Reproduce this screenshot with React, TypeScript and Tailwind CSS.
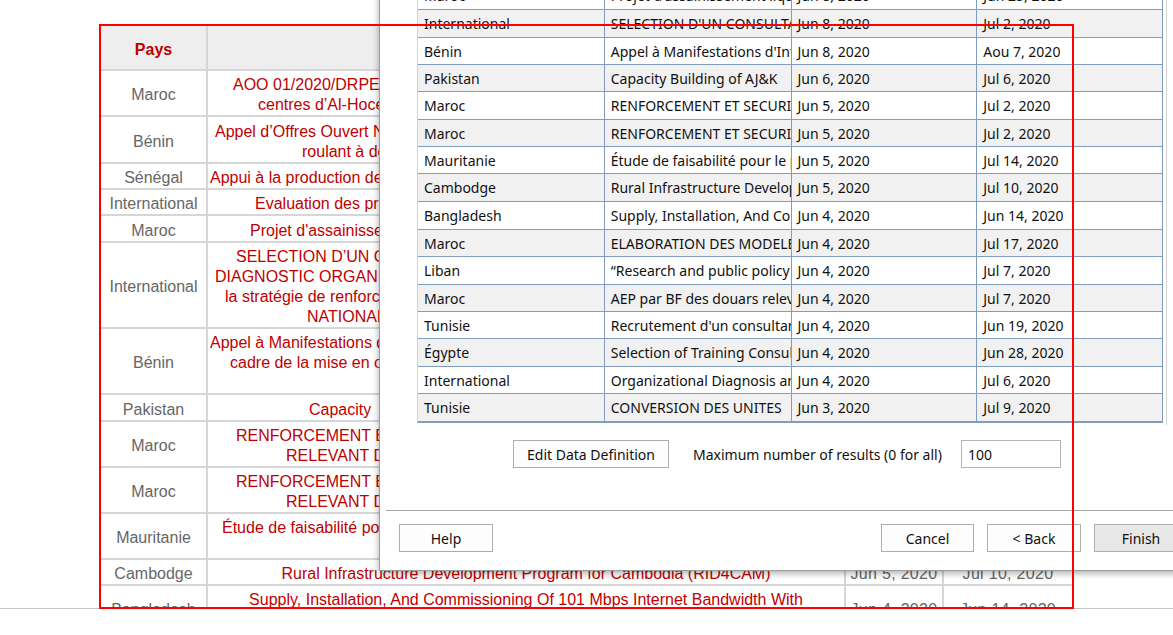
import React from 'react';

type PageRow = {
  h: string;
  country: string;
  lines?: [string, string][];
  centered?: string[];
  pub: string;
  due: string;
};

const pageRows: PageRow[] = [
  { h: 'h-[46px]', country: 'Maroc', lines: [['pl-[25px]', 'AOO 01/2020/DRPE/AT/ER pour les travaux de construction des'], ['pl-[50px]', 'centres d’Al-Hoceima et de Taza']], pub: 'Jun 9, 2020', due: 'Jul 8, 2020' },
  { h: 'h-[47px]', country: 'Bénin', lines: [['pl-[7px]', 'Appel d’Offres Ouvert National pour l’acquisition de matériel'], ['pl-[94px]', 'roulant à deux roues']], pub: 'Jun 9, 2020', due: 'Jul 9, 2020' },
  { h: 'h-[26px]', country: 'Sénégal', lines: [['pl-[2px]', 'Appui à la production de statistiques agricoles']], pub: 'Jun 9, 2020', due: 'Jun 30, 2020' },
  { h: 'h-[26px]', country: 'International', lines: [['pl-[47px]', 'Evaluation des programmes']], pub: 'Jun 8, 2020', due: 'Jun 22, 2020' },
  { h: 'h-[27px]', country: 'Maroc', lines: [['pl-[42px]', "Projet d'assainissement liquide"]], pub: 'Jun 8, 2020', due: 'Jun 25, 2020' },
  { h: 'h-[86px]', country: 'International', lines: [['pl-[28px]', 'SELECTION D’UN CONSULTANT POUR LA REALISATION'], ['pl-[7px]', 'DIAGNOSTIC ORGANISATIONNEL ET L’ELABORATION DE'], ['pl-[17px]', 'la stratégie de renforcement des capacités du COMITE'], ['pl-[99px]', 'NATIONAL OLYMPIQUE']], pub: 'Jun 8, 2020', due: 'Jul 2, 2020' },
  { h: 'h-[66px]', country: 'Bénin', lines: [['pl-[2px]', 'Appel à Manifestations d’Intérêt pour le recrutement'], ['pl-[22px]', 'cadre de la mise en œuvre du projet'], ['pl-[200px]', 'de développement communal']], pub: 'Jun 8, 2020', due: 'Aou 7, 2020' },
  { h: 'h-[27px]', country: 'Pakistan', lines: [['pl-[101px]', 'Capacity\u2003Building of AJ&K']], pub: 'Jun 6, 2020', due: 'Jul 6, 2020' },
  { h: 'h-[46px]', country: 'Maroc', lines: [['pl-[28px]', 'RENFORCEMENT ET SECURISATION DE'], ['pl-[78px]', 'RELEVANT DE LA PROVINCE']], pub: 'Jun 5, 2020', due: 'Jul 2, 2020' },
  { h: 'h-[46px]', country: 'Maroc', lines: [['pl-[28px]', 'RENFORCEMENT ET SECURISATION DE'], ['pl-[78px]', 'RELEVANT DE LA PROVINCE']], pub: 'Jun 5, 2020', due: 'Jul 2, 2020' },
  { h: 'h-[46px]', country: 'Mauritanie', lines: [['pl-[14px]', 'Étude de faisabilité pour le projet'], ['pl-[200px]', 'de Nouakchott']], pub: 'Jun 5, 2020', due: 'Jul 14, 2020' },
  { h: 'h-[26px]', country: 'Cambodge', centered: ['Rural Infrastructure Development Program for Cambodia (RID4CAM)'], pub: 'Jun 5, 2020', due: 'Jul 10, 2020' },
  { h: 'h-[46px]', country: 'Bangladesh', centered: ['Supply, Installation, And Commissioning Of 101 Mbps Internet Bandwidth With', 'Redundancy'], pub: 'Jun 4, 2020', due: 'Jun 14, 2020' },
];

const gridRows: [string, string, string, string, string][] = [
  ['h-[28px]', 'Maroc', "Projet d'assainissement liquide", 'Jun 8, 2020', 'Jun 25, 2020'],
  ['h-[28px]', 'International', "SELECTION D'UN CONSULTANT", 'Jun 8, 2020', 'Jul 2, 2020'],
  ['h-[27px]', 'Bénin', "Appel à Manifestations d'Intérêt", 'Jun 8, 2020', 'Aou 7, 2020'],
  ['h-[27px]', 'Pakistan', 'Capacity Building of AJ&K', 'Jun 6, 2020', 'Jul 6, 2020'],
  ['h-[28px]', 'Maroc', 'RENFORCEMENT ET SECURISATION', 'Jun 5, 2020', 'Jul 2, 2020'],
  ['h-[27px]', 'Maroc', 'RENFORCEMENT ET SECURISATION', 'Jun 5, 2020', 'Jul 2, 2020'],
  ['h-[27px]', 'Mauritanie', 'Étude de faisabilité pour le projet', 'Jun 5, 2020', 'Jul 14, 2020'],
  ['h-[28px]', 'Cambodge', 'Rural Infrastructure Development', 'Jun 5, 2020', 'Jul 10, 2020'],
  ['h-[28px]', 'Bangladesh', 'Supply, Installation, And Commissioning', 'Jun 4, 2020', 'Jun 14, 2020'],
  ['h-[27px]', 'Maroc', 'ELABORATION DES MODELES', 'Jun 4, 2020', 'Jul 17, 2020'],
  ['h-[28px]', 'Liban', '“Research and public policy', 'Jun 4, 2020', 'Jul 7, 2020'],
  ['h-[27px]', 'Maroc', 'AEP par BF des douars relevant', 'Jun 4, 2020', 'Jul 7, 2020'],
  ['h-[27px]', 'Tunisie', "Recrutement d'un consultant", 'Jun 4, 2020', 'Jun 19, 2020'],
  ['h-[28px]', 'Égypte', 'Selection of Training Consultant', 'Jun 4, 2020', 'Jun 28, 2020'],
  ['h-[27px]', 'International', 'Organizational Diagnosis and', 'Jun 4, 2020', 'Jul 6, 2020'],
  ['h-[28px]', 'Tunisie', 'CONVERSION DES UNITES', 'Jun 3, 2020', 'Jul 9, 2020'],
];

const cell = 'border-r-2 border-b-2 border-[#d6d6d6] overflow-hidden pt-[4px]';
const gCell = 'border-r border-[#7f9bbd] overflow-hidden whitespace-nowrap pl-[6px] flex items-center';
const winBtn = 'h-[28px] border border-[#adadad] flex items-center justify-center text-[#111]';

const App: React.FC = () => {
  return (
    <div className="relative w-[1173px] h-[635px] bg-white overflow-hidden">
      {/* web page behind the dialog */}
      <div className="h-[609px] border-b border-[#c4c4c4] pt-[26px] pl-[101px] overflow-hidden font-['Liberation_Sans',Arial,sans-serif] text-[16px] leading-[20px]">
        <div className="w-[973px]">
          {/* header */}
          <div className="flex h-[45px] bg-[#eeeeee]">
            <div className={`${cell} w-[107px] flex items-center justify-center font-bold text-[#c00000]`}>Pays</div>
            <div className={`${cell} w-[638px]`}></div>
            <div className={`${cell} w-[98px]`}></div>
            <div className={`${cell} w-[130px]`}></div>
          </div>
          {pageRows.map((r, i) => (
            <div key={i} className={`flex ${r.h}`}>
              <div className={`${cell} w-[107px] flex items-center justify-center text-[#666666]`}>{r.country}</div>
              <div className={`${cell} w-[638px] flex flex-col justify-center text-[#c00000] whitespace-nowrap`}>
                {r.lines &&
                  r.lines.map(([pad, t], j) => (
                    <div key={j} className={pad}>
                      {t}
                    </div>
                  ))}
                {r.centered &&
                  r.centered.map((t, j) => (
                    <div key={j} className="text-center">
                      {t}
                    </div>
                  ))}
              </div>
              <div className={`${cell} w-[98px] flex items-center justify-center text-[#666666] tracking-[0.3px]`}>{r.pub}</div>
              <div className={`${cell} w-[130px] flex items-center justify-center text-[#666666] tracking-[0.3px]`}>{r.due}</div>
            </div>
          ))}
        </div>
      </div>

      {/* wizard dialog */}
      <div className="absolute left-[379px] top-[-19px] w-[829px] h-[590px] bg-white border border-[#9c9c9c] shadow-[0_2px_7px_rgba(0,0,0,0.35)] flex flex-col font-['Noto_Sans',sans-serif] text-[14px] text-[#111]">
        <div className="ml-[37px] w-[750px] h-[443px] border-r border-[#d4d4d4] pr-[3px]">
          <div className="w-[746px] border-l border-[#c9d4e2] border-b border-b-[#7f9bbd]">
            {gridRows.map(([h, c1, c2, c3, c4], i) => (
              <div key={i} className={`flex ${h} border-b border-[#809cbf] ${i % 2 === 1 ? 'bg-[#f1f1f1]' : 'bg-white'}`}>
                <div className={`${gCell} w-[187px]`}>{c1}</div>
                <div className={`${gCell} w-[187px]`}>{c2}</div>
                <div className={`${gCell} w-[186px]`}>{c3}</div>
                <div className={`${gCell} w-[186px]`}>{c4}</div>
              </div>
            ))}
          </div>
        </div>

        <div className="flex items-center mt-[15px] ml-[133px]">
          <div className={`${winBtn} w-[156px] bg-[#fdfdfd]`}>Edit Data Definition</div>
          <span className="ml-[24px]">Maximum number of results (0 for all)</span>
          <div className="ml-auto mr-[146px] w-[100px] h-[28px] border border-[#b4b4b4] bg-white flex items-center pl-[6px]">100</div>
        </div>

        <div className="mt-[42px] mx-[6px] h-[2px] border-t border-[#a6a6a6] border-b border-b-white"></div>

        <div className="flex items-center mt-[12px] px-[19px]">
          <div className={`${winBtn} w-[94px] bg-[#fdfdfd]`}>Help</div>
          <div className="ml-auto flex gap-[13px]">
            <div className={`${winBtn} w-[93px] bg-[#fdfdfd]`}>Cancel</div>
            <div className={`${winBtn} w-[94px] bg-[#fdfdfd]`}>&lt; Back</div>
            <div className={`${winBtn} w-[94px] bg-[#e8e8e8]`}>Finish</div>
          </div>
        </div>
      </div>

      {/* red annotation frame */}
      <div className="absolute left-[99px] top-[24px] w-[975px] h-[585px] border-2 border-[#ff0000] pointer-events-none"></div>
    </div>
  );
};

export default App;
